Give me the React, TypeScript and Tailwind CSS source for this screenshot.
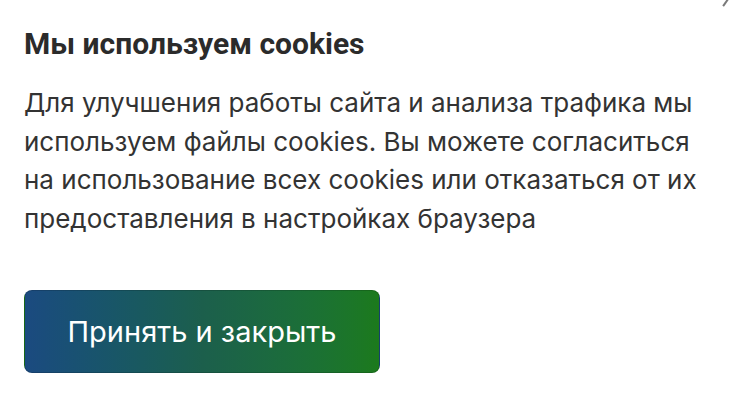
export default function App() {
  return (
    <div className="relative h-[414px] w-[738px] overflow-hidden bg-white">
      <div className="absolute left-[725px] top-[-3px] h-[10px] w-[2px] rotate-[35deg] bg-[#7a7a7a]" />
      <div className="flex flex-col px-6 pt-[26px]">
        <h2 className="font-['Roboto',sans-serif] text-[30px] font-bold leading-[36px] text-[#2b2b2b]">
          Мы используем cookies
        </h2>
        <p className="mt-[22px] w-[680px] font-['Inter',sans-serif] text-[26px] leading-[38.5px] text-[#333333]">
          Для улучшения работы сайта и анализа трафика мы используем файлы cookies. Вы можете согласиться на использование всех cookies или отказаться от их предоставления в настройках браузера
        </p>
        <button className="mt-[52px] flex h-[83px] w-[356px] items-center justify-center rounded-[8px] border border-black/15 bg-gradient-to-r from-[#1b4a80] via-[#1c5f4c] to-[#1c7a1c] font-['Inter',sans-serif] text-[29px] text-white">
          Принять и закрыть
        </button>
      </div>
    </div>
  );
}
